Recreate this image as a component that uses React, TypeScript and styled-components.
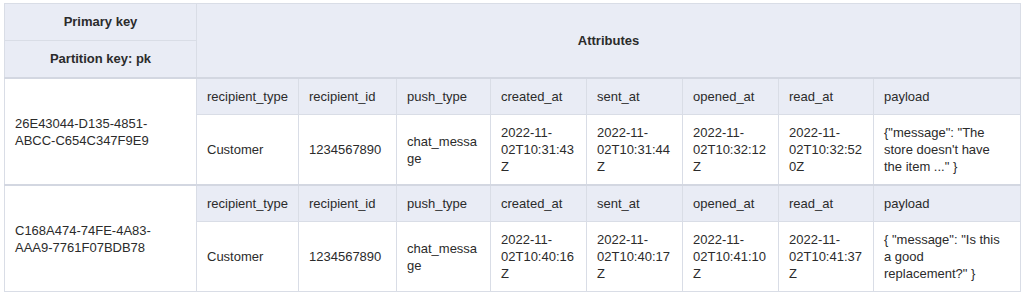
import React from "react";
import styled, {createGlobalStyle} from "styled-components";

const GlobalStyle = createGlobalStyle`
  body {
    margin: 0;
    background: #ffffff;
    font-family: "Liberation Sans", Arial, Helvetica, sans-serif;
  }
`;

interface IItem {
  pk: string;
  values: string[];
}

const columns = [
  "recipient_type",
  "recipient_id",
  "push_type",
  "created_at",
  "sent_at",
  "opened_at",
  "read_at",
  "payload",
];
const widths = [192, 102, 98, 94, 96, 96, 96, 95, 147];

const items: IItem[] = [
  {
    pk: "26E43044-D135-4851-ABCC-C654C347F9E9",
    values: [
      "Customer",
      "1234567890",
      "chat_message",
      "2022-11-02T10:31:43Z",
      "2022-11-02T10:31:44Z",
      "2022-11-02T10:32:12Z",
      "2022-11-02T10:32:520Z",
      "{\"message\": \"The store doesn't have the item ...\" }",
    ],
  },
  {
    pk: "C168A474-74FE-4A83-AAA9-7761F07BDB78",
    values: [
      "Customer",
      "1234567890",
      "chat_message",
      "2022-11-02T10:40:16Z",
      "2022-11-02T10:40:17Z",
      "2022-11-02T10:41:10Z",
      "2022-11-02T10:41:37Z",
      "{ \"message\": \"Is this a good replacement?\" }",
    ],
  },
];

function App() {
  return (
    <Page>
      <GlobalStyle />
      <Table>
        <colgroup>
          {widths.map((w, i) => (
            <Col key={i} $w={w} />
          ))}
        </colgroup>
        <thead>
          <tr>
            <HeadCell>Primary key</HeadCell>
            <HeadCell colSpan={8} rowSpan={2}>
              Attributes
            </HeadCell>
          </tr>
          <tr>
            <HeadCell>Partition key: pk</HeadCell>
          </tr>
        </thead>
        {items.map((item) => (
          <ItemBody key={item.pk}>
            <tr>
              <KeyCell rowSpan={2}>{item.pk}</KeyCell>
              {columns.map((c) => (
                <SubHead key={c}>{c}</SubHead>
              ))}
            </tr>
            <tr>
              {item.values.map((v, i) => (
                <DataCell key={i}>{v}</DataCell>
              ))}
            </tr>
          </ItemBody>
        ))}
      </Table>
    </Page>
  );
}

const Page = styled.div`
  padding: 3px 4px 0 4px;
`;
const Table = styled.table`
  width: 1016px;
  table-layout: fixed;
  border-collapse: collapse;
  font-size: 13px;
  line-height: 17px;
  color: #2b2b2b;
  border: 1px solid #e2e5ec;
`;
const Col = styled.col<{$w: number}>`
  width: ${({$w}) => $w}px;
`;
const HeadCell = styled.th`
  background: #e9ecf5;
  border: 1px solid #d9dde6;
  font-weight: bold;
  text-align: center;
  vertical-align: middle;
  padding: 9px 10px 10px;
  color: #2b2b2b;
`;
const ItemBody = styled.tbody`
  tr:first-child > * {
    border-top: 2px solid #d3d7e1;
  }
`;
const KeyCell = styled.td`
  background: #ffffff;
  border: 1px solid #d9dde6;
  padding: 8px 10px;
  vertical-align: middle;
  word-break: break-word;
`;
const SubHead = styled.td`
  background: #e9ecf5;
  border: 1px solid #d9dde6;
  padding: 9px 10px;
  vertical-align: middle;
  white-space: nowrap;
  overflow: hidden;
`;
const DataCell = styled.td`
  background: #ffffff;
  border: 1px solid #d9dde6;
  padding: 9px 10px;
  vertical-align: middle;
  overflow-wrap: anywhere;
`;

export default App;
